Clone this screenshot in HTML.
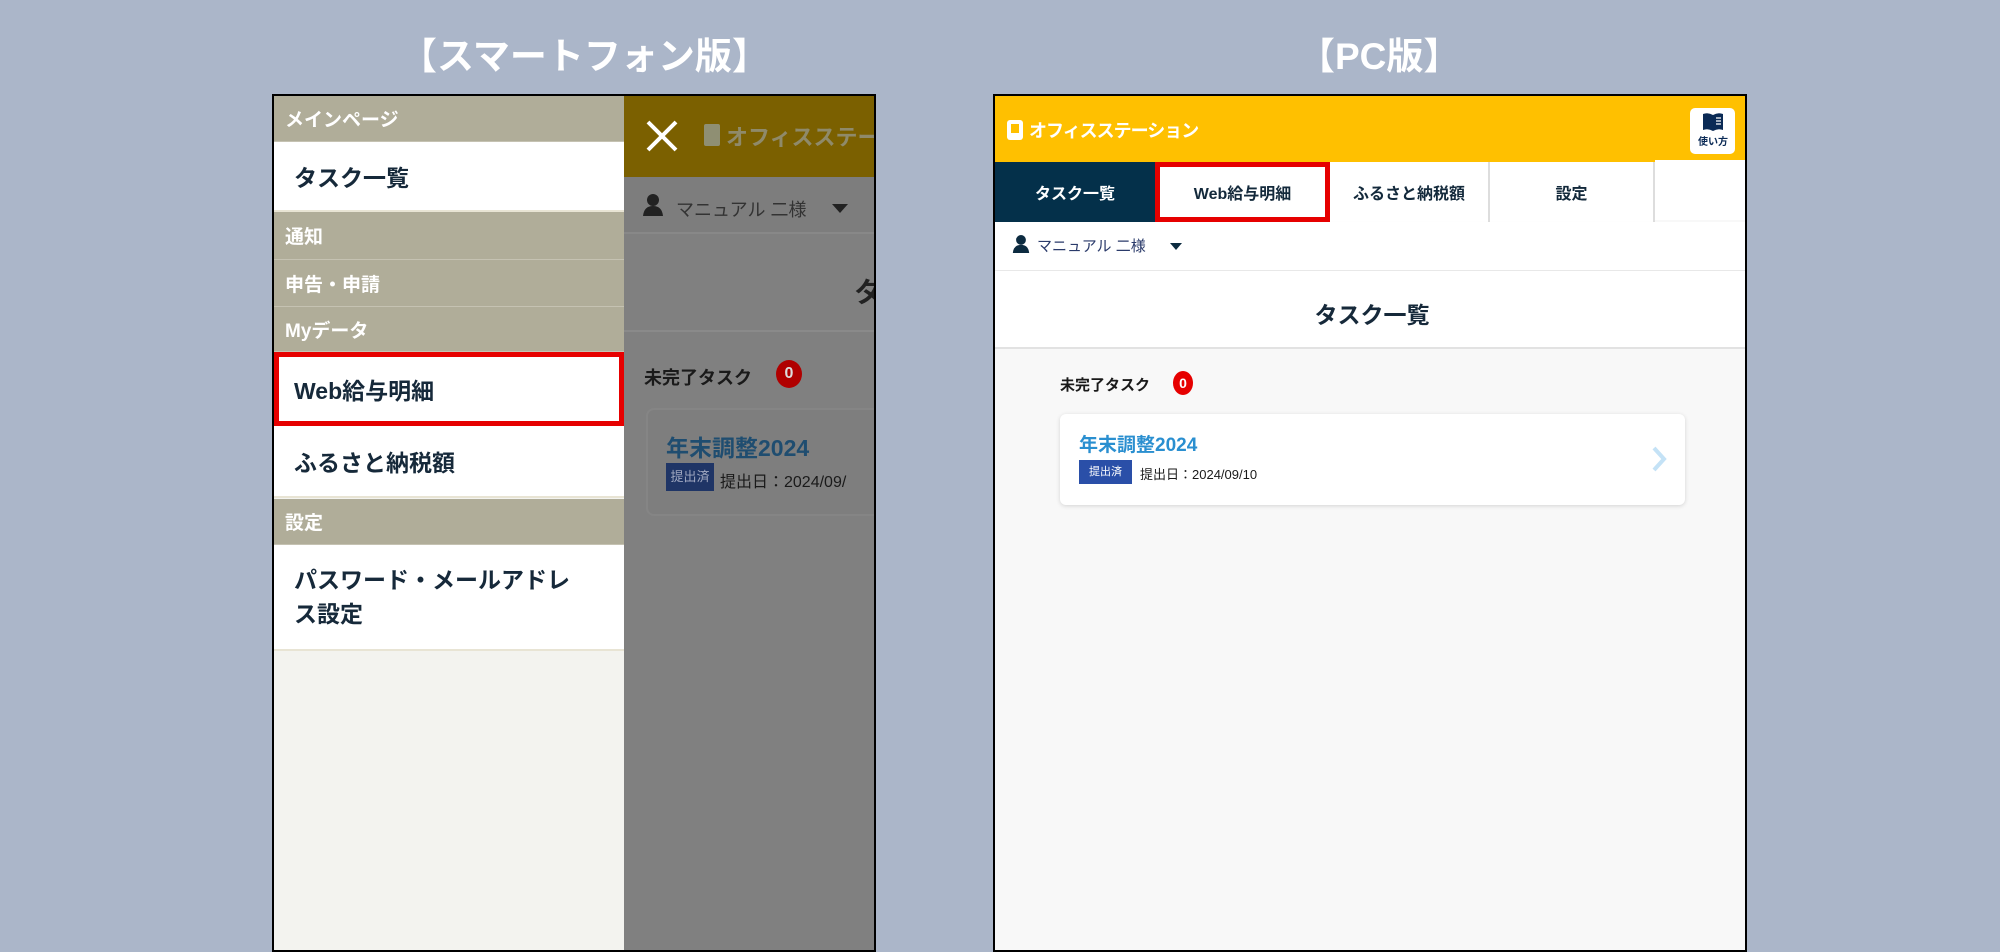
<!DOCTYPE html>
<html><head><meta charset="utf-8"><style>
*{margin:0;padding:0;box-sizing:border-box}
body{width:2000px;height:952px;background:#abb6c9;position:relative;overflow:hidden;font-family:"Liberation Sans","Noto Sans CJK JP",sans-serif;}
.a{position:absolute}
.t{color:#fff;font-weight:bold;font-size:37px;white-space:nowrap}
.frame{position:absolute;border:2px solid #000;overflow:hidden}
.mh{position:absolute;left:0;width:350px;background:#b0ad99;color:#fff;font-weight:bold;font-size:19px;padding-left:11px;display:flex;align-items:center;border-bottom:1px solid #c5c2b2}
.mw{position:absolute;left:0;width:350px;background:#fff;color:#16293a;font-weight:bold;font-size:23px;padding-left:20px;display:flex;align-items:center;border-bottom:2px solid #e8e4d4}
.nav{position:absolute;top:66px;height:60px;display:flex;align-items:center;justify-content:center;font-weight:bold;font-size:16px;color:#13293b;background:#fff;border-right:2px solid #ddd}
</style></head><body>
<div class="a t" style="left:400px;top:26px">【スマートフォン版】</div>
<div class="a t" style="left:1298px;top:26px">【PC版】</div>

<!-- phone -->
<div class="frame" style="left:272px;top:94px;width:604px;height:858px;background:#808080">
  <div class="a" style="left:350px;top:0;width:260px;height:81px;background:#7b6000"></div>
  <svg class="a" style="left:370px;top:22px" width="36" height="36" viewBox="0 0 36 36"><path d="M4 4L32 32M32 4L4 32" stroke="#fff" stroke-width="4"/></svg>
  <div class="a" style="left:430px;top:28px;width:16px;height:22px;background:#8f8f73;border-radius:2px"></div>
  <div class="a" style="left:452px;top:24px;color:#8f8a6a;font-weight:bold;font-size:22px;white-space:nowrap">オフィスステーション</div>
  <div class="a" style="left:350px;top:81px;width:260px;height:57px;background:#7d7d7d;border-bottom:2px solid #888"></div>
  <svg class="a" style="left:368px;top:97px" width="22" height="24" viewBox="0 0 22 24"><circle cx="11" cy="7" r="6" fill="#222"/><path d="M1 23Q2 13 11 13Q20 13 21 23Z" fill="#222"/></svg>
  <div class="a" style="left:402px;top:100px;color:#333;font-size:18px;white-space:nowrap">マニュアル 二様</div>
  <div class="a" style="left:558px;top:108px;border-left:8px solid transparent;border-right:8px solid transparent;border-top:9px solid #222"></div>
  <div class="a" style="left:580px;top:175px;color:#222;font-weight:bold;font-size:28px">タ</div>
  <div class="a" style="left:350px;top:234px;width:260px;height:2px;background:#8a8a8a"></div>
  <div class="a" style="left:370px;top:268px;color:#1a1a1a;font-size:18px;font-weight:bold;white-space:nowrap">未完了タスク</div>
  <div class="a" style="left:502px;top:264px;width:26px;height:28px;border-radius:50%;background:#b00000;color:#ddd;font-size:16px;font-weight:bold;text-align:center;line-height:28px">0</div>
  <div class="a" style="left:372px;top:312px;width:240px;height:108px;background:#7e7e7e;border-radius:8px;border:2px solid #858585"></div>
  <div class="a" style="left:392px;top:333px;color:#1f4d70;font-size:23px;font-weight:bold;white-space:nowrap">年末調整2024</div>
  <div class="a" style="left:392px;top:367px;width:48px;height:28px;background:#1f3566;color:#a0a8c0;font-size:13px;text-align:center;line-height:28px">提出済</div>
  <div class="a" style="left:446px;top:372px;color:#1a1a1a;font-size:16px;white-space:nowrap">提出日：2024/09/</div>

  <div class="a" style="left:0;top:0;width:350px;height:858px;background:#f3f3ef"></div>
  <div class="mh" style="top:0;height:46px">メインページ</div>
  <div class="mw" style="top:46px;height:70px">タスク一覧</div>
  <div class="mh" style="top:116px;height:48px">通知</div>
  <div class="mh" style="top:164px;height:47px">申告・申請</div>
  <div class="mh" style="top:211px;height:45px">Myデータ</div>
  <div class="mw" style="top:256px;height:74px;border:5px solid #e60000;padding-left:15px">Web給与明細</div>
  <div class="mw" style="top:330px;height:72px">ふるさと納税額</div>
  <div class="mh" style="top:403px;height:46px">設定</div>
  <div class="mw" style="top:449px;height:106px;line-height:34px;white-space:nowrap">パスワード・メールアドレ<br>ス設定</div>
</div>

<!-- PC -->
<div class="frame" style="left:993px;top:94px;width:754px;height:858px;background:#f8f8f8">
  <div class="a" style="left:0;top:0;width:754px;height:68px;background:#ffc000"></div>
  <div class="a" style="left:12px;top:24px;width:16px;height:20px;background:#fff;border-radius:3px"></div>
  <div class="a" style="left:16px;top:28px;width:8px;height:9px;background:#ffc000"></div>
  <div class="a" style="left:34px;top:21px;color:#fff;font-weight:bold;font-size:18px;white-space:nowrap;letter-spacing:-1px">オフィスステーション</div>
  <div class="a" style="left:695px;top:12px;width:45px;height:46px;background:#fff;border-radius:5px"></div>
  <svg class="a" style="left:707px;top:16px" width="22" height="20" viewBox="0 0 22 20"><path d="M1 2Q6 0 11 3Q16 0 21 2V18Q16 16 11 19Q6 16 1 18Z" fill="#0a2a55"/><path d="M14 6h5M14 9h5M14 12h5" stroke="#fff" stroke-width="1.2"/></svg>
  <div class="a" style="left:703px;top:37px;color:#0a2a55;font-size:10px;font-weight:bold">使い方</div>
  <div class="nav" style="left:0;width:160px;background:#04304a;color:#fff;border:none">タスク一覧</div>
  <div class="nav" style="left:160px;width:175px;border:5px solid #e60000">Web給与明細</div>
  <div class="nav" style="left:335px;width:160px">ふるさと納税額</div>
  <div class="nav" style="left:495px;width:165px">設定</div>
  <div class="nav" style="left:660px;width:94px;border:none;top:64px"></div>
  <div class="a" style="left:0;top:126px;width:754px;height:48px;background:#fff;box-shadow:0 2px 3px rgba(0,0,0,.08)"></div>
  <svg class="a" style="left:17px;top:138px" width="18" height="20" viewBox="0 0 22 24"><circle cx="11" cy="7" r="6" fill="#0c2b40"/><path d="M1 23Q2 13 11 13Q20 13 21 23Z" fill="#0c2b40"/></svg>
  <div class="a" style="left:42px;top:139px;color:#2a3a6a;font-size:15px;white-space:nowrap">マニュアル 二様</div>
  <div class="a" style="left:175px;top:147px;border-left:6px solid transparent;border-right:6px solid transparent;border-top:7px solid #0c2b40"></div>
  <div class="a" style="left:0;top:175px;width:754px;height:78px;background:#fff;border-bottom:2px solid #e2e2e2"></div>
  <div class="a" style="left:0;top:200px;width:754px;text-align:center;color:#16293a;font-weight:bold;font-size:23px">タスク一覧</div>
  <div class="a" style="left:65px;top:278px;color:#1a1a1a;font-weight:bold;font-size:15px;white-space:nowrap">未完了タスク</div>
  <div class="a" style="left:178px;top:275px;width:20px;height:24px;border-radius:50%;background:#e60000;color:#fff;font-size:14px;font-weight:bold;text-align:center;line-height:24px">0</div>
  <div class="a" style="left:65px;top:318px;width:625px;height:91px;background:#fff;border-radius:6px;box-shadow:0 1px 4px rgba(0,0,0,.15)"></div>
  <div class="a" style="left:84px;top:334px;color:#2a8fd0;font-weight:bold;font-size:19px;white-space:nowrap">年末調整2024</div>
  <div class="a" style="left:84px;top:364px;width:53px;height:24px;background:#2a4fa8;color:#fff;font-size:11px;text-align:center;line-height:24px">提出済</div>
  <div class="a" style="left:145px;top:368px;color:#1a1a1a;font-size:13px;white-space:nowrap">提出日：2024/09/10</div>
  <svg class="a" style="left:656px;top:350px" width="16" height="26" viewBox="0 0 16 26"><path d="M3 2L13 13L3 24" stroke="#c4e2f6" stroke-width="4" fill="none"/></svg>
</div>
</body></html>
